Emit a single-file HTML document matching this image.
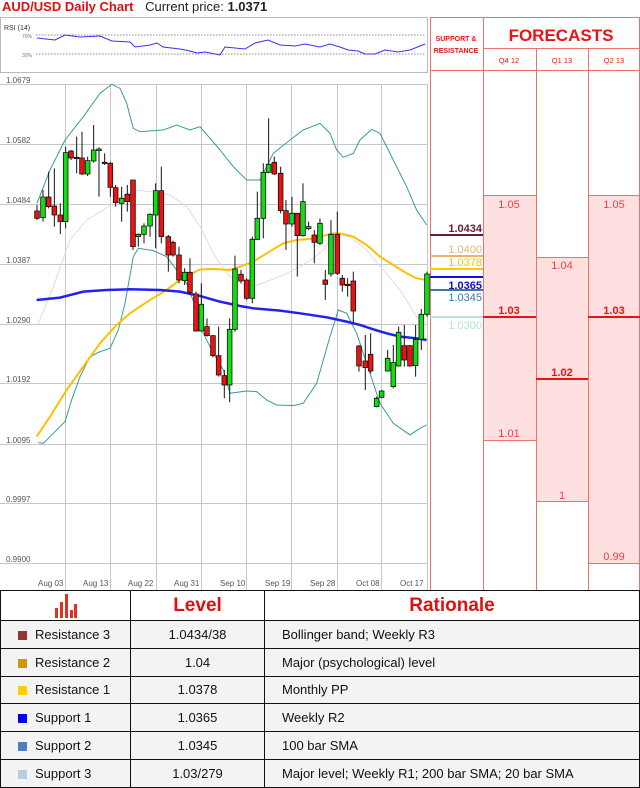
<!DOCTYPE html>
<html><head><meta charset="utf-8"><style>
*{margin:0;padding:0;box-sizing:border-box}
body{width:640px;height:787px;background:#fff;font-family:"Liberation Sans",sans-serif;position:relative;overflow:hidden}
.t{position:absolute;left:0;top:590px;width:640px;height:197px;border-collapse:collapse;table-layout:fixed;font-family:"Liberation Sans",sans-serif;font-size:13px;color:#111}
.t td{border:1px solid #111;height:27.8px;padding:0;background:#f3f3f3;overflow:hidden;white-space:nowrap}
.t tr:first-child td{height:30px;background:#fff}
.h{color:#e01010;font-weight:bold;font-size:19px;text-align:center;font-family:"Liberation Sans",sans-serif}
.c{text-align:center}
.sq{display:inline-block;width:9px;height:9px;margin:0 8px 0 17px;vertical-align:-1px}
</style></head><body>
<div style="position:absolute;left:2px;top:-1px;font-size:13px;white-space:nowrap"><span style="color:#e01010;font-weight:bold">AUD/USD Daily Chart</span> <span style="color:#222;margin-left:8px">Current price: <b>1.0371</b></span></div>
<svg width="640" height="590" style="position:absolute;left:0;top:0" xmlns="http://www.w3.org/2000/svg">
<rect x="0.5" y="17.5" width="427" height="55" fill="#fff" stroke="#bbb"/>
<text x="4" y="30" font-size="7" fill="#333" font-family="Liberation Sans">RSI (14)</text>
<text x="22" y="38" font-size="5" fill="#777">70%</text><text x="22" y="57" font-size="5" fill="#777">30%</text>
<line x1="36" y1="35" x2="425" y2="35" stroke="#666" stroke-dasharray="1.5,1.5" stroke-width="0.7"/>
<line x1="36" y1="54" x2="425" y2="54" stroke="#666" stroke-dasharray="1.5,1.5" stroke-width="0.7"/>
<polyline fill="none" stroke="#3333ee" stroke-width="1" points="37,38 55,40 65,35 80,37 100,36 112,41 130,42 135,47 150,45 157,43 163,47 180,49 190,51 197,53 205,52 220,55 225,47 245,49 255,43 268,40 280,45 295,46 305,44 320,47 330,44 340,47 348,50 358,51 365,54 375,54 385,50 398,52 410,50 425,44"/>
<g stroke="#c8c8c8" stroke-width="1">
<line x1="0" y1="84.5" x2="427" y2="84.5"/><line x1="0" y1="144.5" x2="427" y2="144.5"/><line x1="0" y1="204.5" x2="427" y2="204.5"/><line x1="0" y1="264.5" x2="427" y2="264.5"/><line x1="0" y1="324.5" x2="427" y2="324.5"/><line x1="0" y1="383.5" x2="427" y2="383.5"/><line x1="0" y1="444.5" x2="427" y2="444.5"/><line x1="0" y1="503.5" x2="427" y2="503.5"/><line x1="0" y1="563.5" x2="427" y2="563.5"/>
<line x1="65.5" y1="84" x2="65.5" y2="590"/><line x1="110.5" y1="84" x2="110.5" y2="590"/><line x1="156.5" y1="84" x2="156.5" y2="590"/><line x1="201.5" y1="84" x2="201.5" y2="590"/><line x1="246.5" y1="84" x2="246.5" y2="590"/><line x1="291.5" y1="84" x2="291.5" y2="590"/><line x1="337.5" y1="84" x2="337.5" y2="590"/><line x1="381.5" y1="84" x2="381.5" y2="590"/><line x1="427.5" y1="84" x2="427.5" y2="590"/>
</g>
<g font-size="8" fill="#555" font-family="Liberation Sans">
<text x="6" y="83">1.0679</text><text x="6" y="143">1.0582</text><text x="6" y="203">1.0484</text><text x="6" y="263">1.0387</text><text x="6" y="323">1.0290</text><text x="6" y="382">1.0192</text><text x="6" y="443">1.0095</text><text x="6" y="502">0.9997</text><text x="6" y="562">0.9900</text>
<text x="38" y="586">Aug 03</text><text x="83" y="586">Aug 13</text><text x="128" y="586">Aug 22</text><text x="174" y="586">Aug 31</text><text x="220" y="586">Sep 10</text><text x="265" y="586">Sep 19</text><text x="310" y="586">Sep 28</text><text x="356" y="586">Oct 08</text><text x="400" y="586">Oct 17</text>
</g>
<g transform="translate(0,70) scale(0.3333)" fill="none">
<polyline stroke="#ddd" stroke-width="1" vector-effect="non-scaling-stroke" points="115,760 160,650 210,510 260,450 310,420 350,390 400,360 450,365 510,375 560,410 600,470 640,550 680,610 720,640 760,650 800,635 850,615 900,590 940,565 970,540 1000,495 1050,500 1100,540 1150,600 1200,660 1250,740 1280,760"/>
<polyline stroke="#3a9a9a" stroke-width="1" vector-effect="non-scaling-stroke" points="111,400 150,300 195,210 250,140 300,70 335,43 360,55 380,100 400,175 420,185 490,180 530,165 570,180 600,170 660,240 700,290 740,330 780,330 820,250 870,210 910,180 960,160 990,190 1010,240 1030,262 1060,250 1080,210 1115,178 1140,190 1180,270 1220,350 1250,420 1280,465"/>
<polyline stroke="#3a9a9a" stroke-width="1" vector-effect="non-scaling-stroke" points="115,1118 130,1120 160,1090 195,1055 215,990 240,920 270,860 300,845 330,835 355,780 375,700 400,560 415,535 460,542 500,560 530,600 560,640 590,720 610,790 640,850 670,900 690,970 740,963 770,965 800,990 830,1005 880,1007 910,1000 950,940 990,800 1015,720 1040,730 1070,790 1100,880 1140,1000 1180,1060 1230,1095 1260,1075 1280,1065"/>
<polyline stroke="#ffbf00" stroke-width="2" vector-effect="non-scaling-stroke" points="110,1100 150,1040 200,960 250,890 300,820 350,765 390,730 450,690 500,660 540,630 600,598 640,597 690,600 720,590 760,575 800,550 850,520 890,510 930,507 960,500 1000,490 1020,490 1060,500 1100,525 1140,560 1180,585 1220,610 1250,625 1280,630"/>
<polyline stroke="#2222ee" stroke-width="2.5" vector-effect="non-scaling-stroke" points="110,690 180,683 250,665 320,660 390,658 480,660 540,665 600,678 660,695 720,708 760,715 840,722 900,730 980,742 1040,755 1080,765 1120,778 1160,790 1200,800 1250,805 1280,810"/>
<g id="c"></g>
</g>
<rect x="483" y="195" width="53" height="246" fill="#ffe0e0"/>
<rect x="536" y="257" width="52" height="245" fill="#ffe0e0"/>
<rect x="588" y="195" width="52" height="368" fill="#ffe0e0"/>
<g stroke="#f07070" stroke-width="1">
<line x1="430.5" y1="17" x2="430.5" y2="590"/><line x1="483.5" y1="17" x2="483.5" y2="590"/><line x1="536.5" y1="48" x2="536.5" y2="590"/><line x1="588.5" y1="48" x2="588.5" y2="590"/><line x1="639.5" y1="17" x2="639.5" y2="590"/>
<line x1="430" y1="17.5" x2="640" y2="17.5"/><line x1="483" y1="48.5" x2="640" y2="48.5"/><line x1="430" y1="70.5" x2="640" y2="70.5"/>
<line x1="483" y1="195.5" x2="536" y2="195.5"/><line x1="483" y1="440.5" x2="536" y2="440.5"/>
<line x1="536" y1="257.5" x2="588" y2="257.5"/><line x1="536" y1="501.5" x2="588" y2="501.5"/>
<line x1="588" y1="195.5" x2="640" y2="195.5"/><line x1="588" y1="563.5" x2="640" y2="563.5"/>
</g>
<g stroke="#ee1111" stroke-width="2"><line x1="483" y1="317" x2="536" y2="317"/><line x1="536" y1="379" x2="588" y2="379"/><line x1="588" y1="317" x2="640" y2="317"/></g>
<g font-family="Liberation Sans" fill="#ee1111" text-anchor="middle">
<text x="456" y="41" font-size="7" font-weight="bold">SUPPORT &amp;</text><text x="456" y="53" font-size="7" font-weight="bold">RESISTANCE</text>
<text x="561" y="41" font-size="17" font-weight="bold">FORECASTS</text>
<text x="509" y="63" font-size="7.5">Q4 12</text><text x="562" y="63" font-size="7.5">Q1 13</text><text x="614" y="63" font-size="7.5">Q2 13</text>
<g font-size="11" fill="#f04040"><text x="509" y="208">1.05</text><text x="614" y="208">1.05</text><text x="562" y="269">1.04</text><text x="509" y="437">1.01</text><text x="562" y="499">1</text><text x="614" y="560">0.99</text></g>
<g font-size="11" font-weight="bold"><text x="509" y="314">1.03</text><text x="614" y="314">1.03</text><text x="562" y="376">1.02</text></g>
</g>
<line x1="430" y1="235" x2="483" y2="235" stroke="#6a1a3a" stroke-width="2"/>
<line x1="430" y1="256" x2="483" y2="256" stroke="#e0b870" stroke-width="2"/>
<line x1="430" y1="269" x2="483" y2="269" stroke="#ffc800" stroke-width="2"/>
<line x1="430" y1="277" x2="483" y2="277" stroke="#1010ee" stroke-width="2"/>
<line x1="430" y1="290" x2="483" y2="290" stroke="#3a78a8" stroke-width="2"/>
<line x1="430" y1="317" x2="483" y2="317" stroke="#b8e0e0" stroke-width="2"/>
<g font-family="Liberation Sans" font-size="11" text-anchor="end">
<text x="482" y="232" fill="#6a1a3a" font-weight="bold">1.0434</text>
<text x="482" y="253" fill="#e0b870">1.0400</text>
<text x="482" y="266" fill="#ffc000">1.0378</text>
<text x="482" y="289" fill="#1010cc" font-weight="bold">1.0365</text>
<text x="482" y="301" fill="#3a78a8">1.0345</text>
<text x="482" y="329" fill="#b8e0e0">1.0300</text>
</g>
</svg>
<table class="t">
<colgroup><col style="width:130px"><col style="width:134px"><col></colgroup>
<tr><td style="text-align:center"><svg width="26" height="24" viewBox="0 0 26 24" style="vertical-align:middle"><g fill="#e03020"><rect x="2" y="14" width="3" height="10"/><rect x="7" y="8" width="3" height="16"/><rect x="12" y="0" width="3" height="24"/><rect x="17" y="16" width="3" height="8"/><rect x="21" y="10" width="3" height="14"/></g></svg></td><td class="h">Level</td><td class="h">Rationale</td></tr>
<tr><td><span class="sq" style="background:#953535"></span>Resistance 3</td><td class="c">1.0434/38</td><td style="padding-left:17px">Bollinger band; Weekly R3</td></tr>
<tr><td><span class="sq" style="background:#cc9900"></span>Resistance 2</td><td class="c">1.04</td><td style="padding-left:17px">Major (psychological) level</td></tr>
<tr><td><span class="sq" style="background:#ffcc00"></span>Resistance 1</td><td class="c">1.0378</td><td style="padding-left:17px">Monthly PP</td></tr>
<tr><td><span class="sq" style="background:#0000ff"></span>Support 1</td><td class="c">1.0365</td><td style="padding-left:17px">Weekly R2</td></tr>
<tr><td><span class="sq" style="background:#4f81bd"></span>Support 2</td><td class="c">1.0345</td><td style="padding-left:17px">100 bar SMA</td></tr>
<tr><td><span class="sq" style="background:#b8cce4"></span>Support 3</td><td class="c">1.03/279</td><td style="padding-left:17px">Major level; Weekly R1; 200 bar SMA; 20 bar SMA</td></tr>
</table>
<script>
var d=[[111,423,445,405,450,0],[129,381,443,360,455,1],[146,381,410,305,415,0],[163,408,435,295,470,0],[181,435,455,400,492,0],[197,248,455,230,475,1],[213,243,264,240,270,0],[230,262,266,200,310,0],[246,264,312,185,315,0],[263,272,312,260,318,1],[281,240,273,165,278,1],[297,237,242,232,380,1],[314,277,280,250,285,0],[331,280,352,275,380,0],[347,353,398,345,410,0],[365,385,400,350,455,1],[382,373,395,345,425,0],[399,330,530,330,540,0],[415,493,500,490,530,1],[432,468,493,460,520,1],[450,433,468,430,500,1],[467,362,435,340,535,1],[484,362,500,290,520,0],[505,500,555,495,605,0],[519,517,555,512,560,0],[537,555,630,530,640,0],[554,607,632,595,645,1],[570,607,667,565,675,0],[588,672,783,665,785,0],[604,703,783,640,785,1],[621,770,797,745,800,0],[639,797,857,795,862,0],[656,857,915,770,920,0],[673,917,945,900,985,0],[689,778,945,745,997,1],[705,597,778,557,785,1],[723,613,633,600,640,0],[740,630,685,625,690,0],[757,508,685,500,700,1],[772,445,508,365,510,1],[790,307,445,280,505,1],[806,283,307,145,310,1],[823,277,312,260,315,0],[842,310,422,290,430,0],[858,422,462,390,540,0],[876,430,462,380,470,1],[892,430,497,430,620,0],[909,395,497,340,500,1],[926,470,476,455,480,1],[943,495,517,480,580,0],[960,460,520,445,525,1],[976,630,643,600,690,0],[993,493,612,450,620,1],[1012,493,610,425,615,0],[1027,625,645,615,665,0],[1043,643,647,625,680,0],[1060,633,723,605,760,0],[1077,828,888,825,905,0],[1096,873,893,795,960,0],[1112,853,903,790,910,0],[1130,985,1010,980,1012,1],[1145,963,982,960,985,1],[1163,865,903,840,905,1],[1180,878,950,825,955,1],[1196,787,888,770,890,1],[1213,827,870,765,890,0],[1230,827,888,825,890,0],[1247,808,887,765,920,1],[1264,733,808,717,840,1],[1281,612,733,605,740,1]];
var s='';d.forEach(function(c){s+='<line x1="'+c[0]+'" y1="'+c[3]+'" x2="'+c[0]+'" y2="'+c[4]+'" stroke="#111" stroke-width="1" vector-effect="non-scaling-stroke"/>';s+='<rect x="'+(c[0]-7)+'" y="'+c[1]+'" width="14" height="'+Math.max(c[2]-c[1],4)+'" fill="'+(c[5]?'#11dd11':'#ee1111')+'" stroke="#111" stroke-width="0.8" vector-effect="non-scaling-stroke"/>';});
document.getElementById('c').innerHTML=s;
</script>
</body></html>
